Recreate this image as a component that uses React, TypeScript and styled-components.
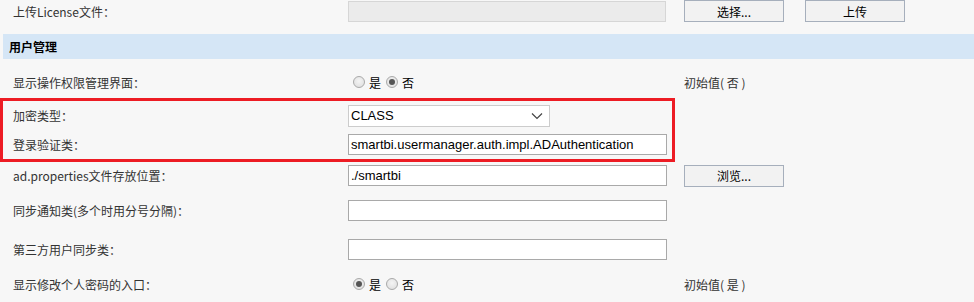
import React from "react";
import styled, { createGlobalStyle } from "styled-components";

const Global = createGlobalStyle`
  html, body { margin: 0; padding: 0; background: #f7f7f7; }
  body { font-family: "Microsoft YaHei", "Noto Sans CJK SC", sans-serif; font-size: 12px; color: #333; }
`;

const Page = styled.div`
  width: 974px;
  height: 302px;
  overflow: hidden;
  display: flex;
  flex-direction: column;
`;

const Row = styled.div<{ $h: number; $pt?: number; $pl?: number }>`
  height: ${(p) => p.$h}px;
  padding-top: ${(p) => p.$pt ?? 0}px;
  padding-left: ${(p) => p.$pl ?? 13}px;
  box-sizing: content-box;
  display: flex;
  align-items: center;
  flex-shrink: 0;
`;

const Label = styled.div`
  width: 335px;
  flex-shrink: 0;
  font-size: 12px;
  color: #333;
  white-space: nowrap;
`;

const Field = styled.div`
  width: 336px;
  flex-shrink: 0;
  display: flex;
  align-items: center;
`;

const Extra = styled.div`
  display: flex;
  align-items: center;
  gap: 21px;
  color: #333;
  font-size: 12px;
`;

const TextBox = styled.div<{ $w?: number; $disabled?: boolean }>`
  width: ${(p) => p.$w ?? 319}px;
  height: 21px;
  box-sizing: border-box;
  border: 1px solid ${(p) => (p.$disabled ? "#d6d6d6" : "#a9a9a9")};
  background: ${(p) => (p.$disabled ? "#ebebeb" : "#fff")};
  font-family: "Liberation Sans", Arial, sans-serif;
  font-size: 13px;
  color: #000;
  padding: 0 2px;
  display: flex;
  align-items: center;
  white-space: nowrap;
  overflow: hidden;
`;

const SelectBox = styled.div`
  width: 202px;
  height: 22px;
  box-sizing: border-box;
  border: 1px solid #cccccc;
  background: #fff;
  font-family: "Liberation Sans", Arial, sans-serif;
  font-size: 13px;
  color: #000;
  padding: 0 6px 0 2px;
  display: flex;
  align-items: center;
  justify-content: space-between;
`;

const Button = styled.div`
  width: 100px;
  height: 22px;
  box-sizing: border-box;
  border: 1px solid #a6afbc;
  background: #f2f2f2;
  color: #000;
  font-size: 12px;
  display: flex;
  align-items: center;
  justify-content: center;
`;

const Header = styled.div`
  margin: 12px 0 0 3px;
  height: 25px;
  background: #d5e6f6;
  display: flex;
  align-items: center;
  padding-left: 6px;
  font-weight: bold;
  font-size: 12px;
  color: #000;
  flex-shrink: 0;
`;

const Highlight = styled.div`
  width: 675px;
  box-sizing: border-box;
  border: 3px solid #ed1c24;
  display: flex;
  flex-direction: column;
  flex-shrink: 0;
`;

const RadioGroup = styled.div`
  display: flex;
  align-items: center;
  padding-left: 5px;
  gap: 4px;
  color: #000;
`;

const RadioDot = styled.span<{ $on?: boolean }>`
  width: 12px;
  height: 12px;
  border-radius: 50%;
  box-sizing: border-box;
  border: 1px solid #a9a9a9;
  background: radial-gradient(circle at 50% 40%, #f4f4f4 0%, #dcdcdc 100%);
  position: relative;
  display: inline-block;
  &::after {
    content: "";
    display: ${(p) => (p.$on ? "block" : "none")};
    position: absolute;
    left: 2px;
    top: 2px;
    width: 6px;
    height: 6px;
    border-radius: 50%;
    background: #555;
  }
`;

const RadioText = styled.span`
  margin-right: 1px;
`;

const Chevron = () => (
  <svg width="12" height="8" viewBox="0 0 12 8">
    <path d="M1 1.5 L6 6.5 L11 1.5" fill="none" stroke="#444" strokeWidth="1.2" />
  </svg>
);

const YesNo = ({ yes }: { yes: boolean }) => (
  <RadioGroup>
    <RadioDot $on={yes} />
    <RadioText>是</RadioText>
    <RadioDot $on={!yes} />
    <RadioText>否</RadioText>
  </RadioGroup>
);

export default function App() {
  return (
    <Page>
      <Global />
      <Row $h={22}>
        <Label>上传License文件：</Label>
        <Field>
          <TextBox $w={318} $disabled />
        </Field>
        <Extra>
          <Button>选择...</Button>
          <Button>上传</Button>
        </Extra>
      </Row>
      <Header>用户管理</Header>
      <Row $h={32} $pt={7}>
        <Label>显示操作权限管理界面：</Label>
        <Field>
          <YesNo yes={false} />
        </Field>
        <Extra>初始值( 否 )</Extra>
      </Row>
      <Highlight>
        <Row $h={29} $pl={10}>
          <Label>加密类型：</Label>
          <Field>
            <SelectBox>
              <span>CLASS</span>
              <Chevron />
            </SelectBox>
          </Field>
        </Row>
        <Row $h={29} $pl={10}>
          <Label>登录验证类：</Label>
          <Field>
            <TextBox>smartbi.usermanager.auth.impl.ADAuthentication</TextBox>
          </Field>
        </Row>
      </Highlight>
      <Row $h={27}>
        <Label>ad.properties文件存放位置：</Label>
        <Field>
          <TextBox>./smartbi</TextBox>
        </Field>
        <Extra>
          <Button>浏览...</Button>
        </Extra>
      </Row>
      <Row $h={43}>
        <Label>同步通知类(多个时用分号分隔)：</Label>
        <Field>
          <TextBox />
        </Field>
      </Row>
      <Row $h={35}>
        <Label>第三方用户同步类：</Label>
        <Field>
          <TextBox />
        </Field>
      </Row>
      <Row $h={34}>
        <Label>显示修改个人密码的入口：</Label>
        <Field>
          <YesNo yes={true} />
        </Field>
        <Extra>初始值( 是 )</Extra>
      </Row>
    </Page>
  );
}
